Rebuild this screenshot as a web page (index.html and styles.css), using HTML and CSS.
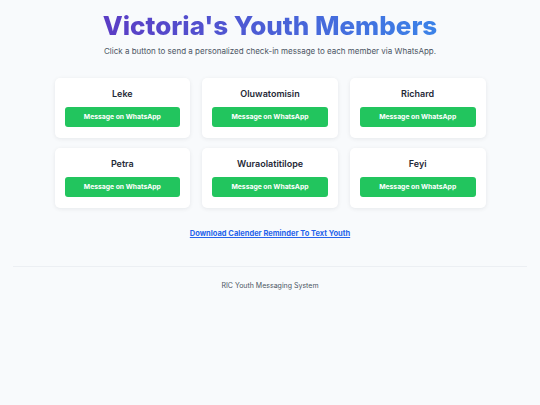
FILE: index.html
```html
<!DOCTYPE html>
<html lang="en">
<head>
<meta charset="utf-8">
<title>Victoria's Youth Members</title>
<link rel="stylesheet" href="styles.css">
</head>
<body>
<header class="header">
  <h1 class="title">Victoria's Youth Members</h1>
  <p class="subtitle">Click a button to send a personalized check-in message to each member via WhatsApp.</p>
</header>
<main class="grid">
  <div class="card"><div class="name">Leke</div><a class="btn" href="#">Message on WhatsApp</a></div>
  <div class="card"><div class="name">Oluwatomisin</div><a class="btn" href="#">Message on WhatsApp</a></div>
  <div class="card"><div class="name">Richard</div><a class="btn" href="#">Message on WhatsApp</a></div>
  <div class="card"><div class="name">Petra</div><a class="btn" href="#">Message on WhatsApp</a></div>
  <div class="card"><div class="name">Wuraolatitilope</div><a class="btn" href="#">Message on WhatsApp</a></div>
  <div class="card"><div class="name">Feyi</div><a class="btn" href="#">Message on WhatsApp</a></div>
</main>
<div class="linkwrap"><a class="dl" href="#">Download Calender Reminder To Text Youth</a></div>
<footer class="footer">RIC Youth Messaging System</footer>
</body>
</html>
```
FILE: styles.css
```css
body {
  margin: 0;
  background: #f8fafc;
  font-family: Inter, "Noto Sans", sans-serif;
  color: #1f2937;
}
.header {
  text-align: center;
  padding-top: 11px;
}
.title {
  margin: 0;
  font-size: 26px;
  line-height: 30px;
  font-weight: 800;
  display: inline-block;
  background: linear-gradient(90deg, #5b3cc4, #3b82e8);
  -webkit-background-clip: text;
  background-clip: text;
  color: transparent;
}
.subtitle {
  margin: 4px 0 0;
  font-size: 8px;
  line-height: 12px;
  color: #4b5563;
}
.grid {
  width: 431px;
  margin: 21px auto 0;
  display: grid;
  grid-template-columns: repeat(3, 1fr);
  gap: 10px 12px;
}
.card {
  background: #fff;
  border-radius: 5px;
  box-shadow: 0 1px 4px rgba(15, 23, 42, 0.08);
  padding: 10px 10px 11px;
  text-align: center;
}
.name {
  font-size: 9px;
  font-weight: 600;
  line-height: 12px;
  margin-bottom: 7px;
  color: #1f2937;
}
.btn {
  display: block;
  height: 20px;
  line-height: 20px;
  background: #22c55e;
  color: #fff;
  border-radius: 3px;
  font-size: 6.8px;
  font-weight: 700;
  text-decoration: none;
}
.linkwrap {
  text-align: center;
  margin-top: 16px;
  line-height: 12px;
}
.dl {
  font-size: 7.5px;
  font-weight: 700;
  color: #2563eb;
  text-decoration: underline;
}
.footer {
  margin: 26px 13px 0;
  border-top: 1px solid #eceff3;
  padding-top: 14px;
  text-align: center;
  font-size: 7px;
  line-height: 10px;
  color: #4b5563;
}
```
